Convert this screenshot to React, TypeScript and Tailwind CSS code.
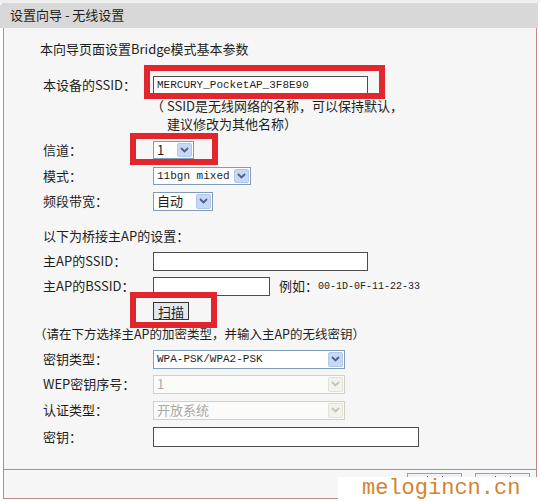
import React from "react";

const cjk = "font-['Noto_Sans_CJK_SC',sans-serif]";
const mono = "font-['Liberation_Mono','Noto_Sans_CJK_SC',monospace]";

const Chevron = ({ color }: { color: string }) => (
  <svg width="9" height="6" viewBox="0 0 9 6">
    <path d="M1 1 L4.5 4.5 L8 1" fill="none" stroke={color} strokeWidth="1.8" />
  </svg>
);

type SelectProps = { value: string; w: string; h?: string; disabled?: boolean; latin?: boolean };

const Select = ({ value, w, h = "h-[19px]", disabled, latin }: SelectProps) => (
  <div
    className={`${w} ${h} flex border ${
      disabled ? "border-[#d2d0c4] bg-[#fbfbf9] text-[#a9a9a9]" : "border-[#7f9db9] bg-white text-[#1e1e1e]"
    }`}
  >
    <span className={`flex-1 flex items-center pl-[3px] ${latin ? `${mono} text-[11px]` : "text-[13px]"}`}>
      {value}
    </span>
    <span
      className={`w-[15px] m-[1px] flex items-center justify-center rounded-[2px] border ${
        disabled ? "bg-[#f3f2ec] border-[#e2e0d8]" : "bg-[#c6d8f6] border-[#b3c6ea]"
      }`}
    >
      <Chevron color={disabled ? "#c4c4bc" : "#4a5f8c"} />
    </span>
  </div>
);

const Input = ({ w, h = "h-[19px]", value }: { w: string; h?: string; value?: string }) => (
  <div className={`${w} ${h} border border-[#4d4d4d] bg-white flex items-center pl-[3px] ${mono} text-[11px] text-[#1e1e1e]`}>
    {value}
  </div>
);

const Row = ({ label, cls, children }: { label: string; cls: string; children?: React.ReactNode }) => (
  <div className={`${cls} flex items-center pl-[39px]`}>
    <span className="w-[110px] shrink-0">{label}</span>
    {children}
  </div>
);

const RedBox = ({ cls }: { cls: string }) => (
  <div className={`absolute border-[6px] border-[#e2262d] pointer-events-none ${cls}`} />
);

// footer buttons: only their top edge shows above the watermark strip
const NavButton = () => (
  <div className="w-[55px] h-[22px] border border-[#8aa2c6] bg-[#eef2f8] flex justify-center gap-[14px] pt-[2px]">
    <span className="w-px h-[4px] bg-[#555]" />
    <span className="w-px h-[4px] bg-[#555]" />
  </div>
);

export default function App() {
  return (
    <div className={`relative w-[540px] h-[501px] overflow-hidden bg-white text-[13px] text-[#1e1e1e] ${cjk}`}>
      {/* title bar */}
      <div className="h-[3px] bg-[#efefef]" />
      <div className="h-[25px] mr-[2px] bg-[#d8d8d8] rounded-tl-[4px] flex items-center pl-[10px] pb-[1px]">
        设置向导 - 无线设置
      </div>

      {/* main panel */}
      <div className="ml-[3px] mr-[3px] bg-[#f6f6f6] border-x border-b border-[#b98a86] pt-[11px] pb-[20px] flex flex-col">
        <div className="h-[20px] flex items-center pl-[36px]">本向导页面设置Bridge模式基本参数</div>

        <Row label="本设备的SSID：" cls="h-[24px] mt-[14px]">
          <Input w="w-[215px]" value="MERCURY_PocketAP_3F8E90" />
        </Row>
        <div className="h-[18px] flex items-center pl-[147px]">（ SSID是无线网络的名称，可以保持默认，</div>
        <div className="h-[18px] flex items-center pl-[163px]">建议修改为其他名称）</div>

        <Row label="信道：" cls="h-[24px] mt-[5px]">
          <Select value="1" w="w-[41px]" h="h-[18px]" />
        </Row>
        <Row label="模式：" cls="h-[24px] mt-[2px]">
          <Select value="11bgn mixed" w="w-[98px]" h="h-[18px]" latin />
        </Row>
        <Row label="频段带宽：" cls="h-[24px] mt-[1px]">
          <Select value="自动" w="w-[60px]" h="h-[19px]" />
        </Row>

        <div className="h-[24px] mt-[11px] flex items-center pl-[39px]">以下为桥接主AP的设置：</div>
        <Row label="主AP的SSID：" cls="h-[24px] mt-[1px]">
          <Input w="w-[215px]" />
        </Row>
        <Row label="主AP的BSSID：" cls="h-[24px] mt-[1px]">
          <Input w="w-[117px]" />
          <span className="ml-[9px]">例如：</span>
          <span className={`${mono} text-[10px]`}>00-1D-0F-11-22-33</span>
        </Row>
        <div className="h-[24px] mt-[1px] flex items-center pl-[149px]">
          <button className="h-[18px] w-[36px] border border-[#333] bg-[#e3e8ee] text-[13px] leading-none flex items-center justify-center">
            扫描
          </button>
        </div>
        <div className="h-[22px] flex items-center pl-[30px] text-[12.5px]">（请在下方选择主AP的加密类型，并输入主AP的无线密钥）</div>

        <Row label="密钥类型：" cls="h-[24px] mt-[2px]">
          <Select value="WPA-PSK/WPA2-PSK" w="w-[192px]" latin />
        </Row>
        <Row label="WEP密钥序号：" cls="h-[24px] mt-[1px]">
          <Select value="1" w="w-[192px]" disabled />
        </Row>
        <Row label="认证类型：" cls="h-[24px] mt-[2px]">
          <Select value="开放系统" w="w-[192px]" disabled />
        </Row>
        <Row label="密钥：" cls="h-[24px] mt-[3px]">
          <Input w="w-[266px]" h="h-[20px]" />
        </Row>
      </div>

      {/* footer */}
      <div className="ml-[3px] mr-[3px] h-[29px] bg-[#f6f6f6] border-x border-b border-[#b98a86] flex justify-end gap-[13px] pt-[3px] pr-[6px]">
        <NavButton />
        <NavButton />
      </div>

      {/* annotations */}
      <RedBox cls="left-[144px] top-[65px] w-[241px] h-[34px]" />
      <RedBox cls="left-[130px] top-[133px] w-[88px] h-[32px]" />
      <RedBox cls="left-[130px] top-[292px] w-[87px] h-[36px]" />

      {/* watermark */}
      <div className={`absolute right-0 bottom-0 w-[202px] h-[24px] bg-white pl-[24px] ${mono} text-[22px] leading-[24px] text-[#d4832f]`}>
        melogincn.cn
      </div>
    </div>
  );
}
